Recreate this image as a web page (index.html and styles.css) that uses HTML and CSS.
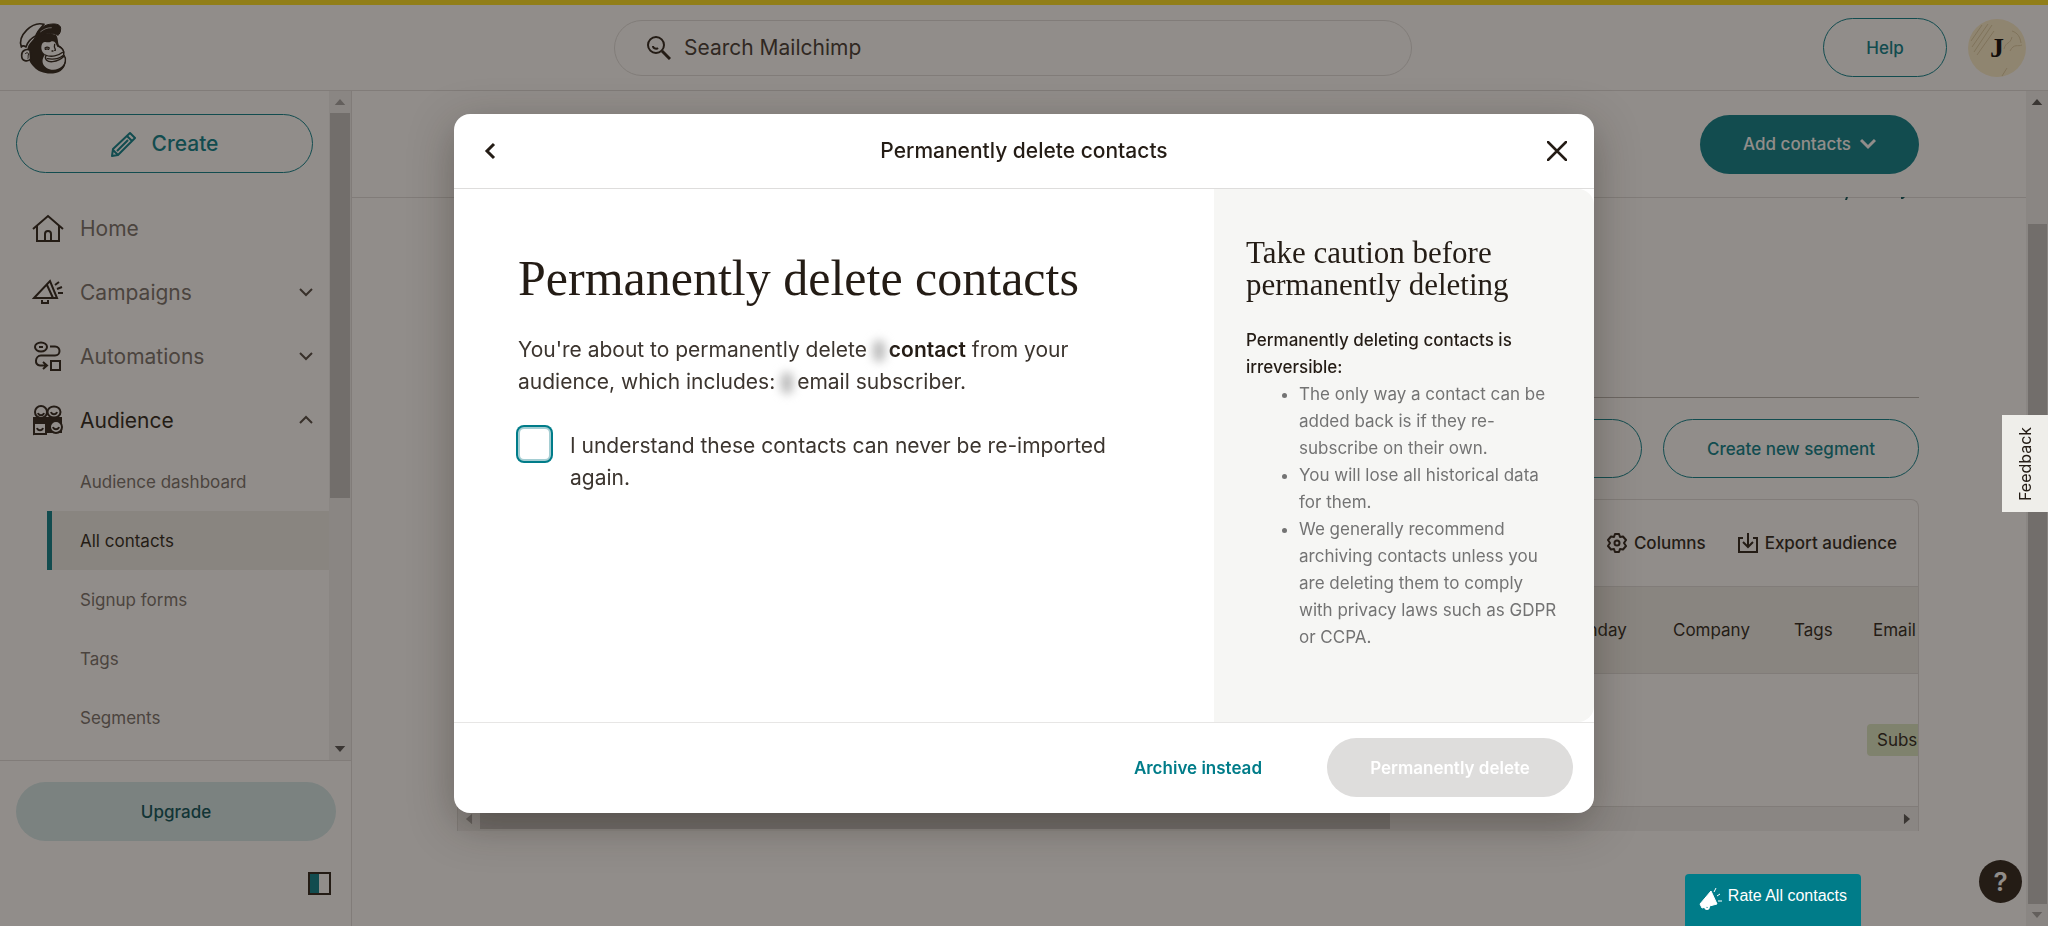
FILE: index.html
```html
<!DOCTYPE html>
<html lang="en">
<head>
    <meta charset="UTF-8">
    <meta name="viewport" content="width=device-width, initial-scale=1.0">
    <title>Permanently delete contacts | Mailchimp</title>
    <link rel="stylesheet" href="styles.css">
</head>
<body>

    <!-- Top bar -->
    <header class="topbar">
        <a href="#" class="logo" aria-label="Mailchimp">
            <svg width="64" height="66" viewBox="0 0 192 198" fill="none" stroke="#241c15" stroke-linecap="round" stroke-linejoin="round">
                <path d="M52 112 C50 90 64 78 80 66 C104 52 122 54 138 60 C146 70 142 84 148 92 C160 98 164 112 162 120 C172 132 168 156 152 168 C128 182 88 176 72 156 C60 146 54 130 52 112 Z" fill="#241c15" stroke="none"/>
                <path d="M98 84 C106 77 113 85 122 80 C136 75 138 89 142 95 C154 99 161 107 159 114 C157 124 165 124 165 132 C166 150 150 164 130 164 C114 164 103 156 99 146 C95 134 101 126 105 118 C93 110 91 94 98 84 Z" fill="#fff" stroke="none"/>
                <path d="M34 96 C22 62 66 18 102 28 C92 40 82 48 78 62 C62 70 52 82 48 96 C42 92 37 92 34 96 Z" fill="#fff" stroke-width="5"/>
                <path d="M78 62 C84 44 96 36 110 30 C130 24 152 26 152 40 C152 52 148 58 144 61 C132 54 116 54 100 60 C90 64 86 72 70 78 Z" fill="#241c15" stroke-width="3"/>
                <path d="M92 50 C102 42 112 38 124 38" stroke="#fff" stroke-width="2"/>
                <path d="M60 106 C50 100 34 106 35 122 C35 138 52 142 62 132 Z" fill="#fff" stroke-width="5"/>
                <path d="M46 116 C50 110 58 114 55 120 C53 124 56 126 54 130" stroke-width="3"/>
                <path d="M105 99 C109 96 114 96 118 99 M106 103 C110 101 113 101 116 103 M134 88 C132 94 134 100 136 103 M126 108 L129 108 M134 106 L136 106" stroke-width="4"/>
                <path d="M106 120 C124 128 146 122 158 112 M108 122 C102 132 112 142 128 140 C146 138 156 130 162 124 M112 131 C130 134 148 130 158 122" stroke-width="4"/>
                <path d="M144 92 C156 98 164 108 161 118 C170 130 168 150 154 162" stroke-width="4"/>
            </svg>
        </a>
        <form class="search" role="search">
            <svg width="24" height="24" viewBox="0 0 24 24" fill="none" stroke="#241c15" stroke-width="2">
                <circle cx="9" cy="9" r="8"/>
                <path d="M15 15 L23 23" stroke-width="3"/>
                <path d="M6 10 C6 13 10 13 11 12"/>
            </svg>
            <input type="search" id="search" aria-label="Search Mailchimp" placeholder="Search Mailchimp">
        </form>
        <div class="account">
            <button type="button" class="btn btn-outline btn-help">Help</button>
            <button type="button" class="avatar">
                <svg width="58" height="58" viewBox="0 0 58 58" fill="none" stroke="#dccba0" stroke-width="1">
                    <path d="M3 22 L14 6 M4 28 L20 5 M6 33 L24 6 M9 36 L26 12 M36 30 C38 22 42 26 44 18 M42 32 C46 24 50 28 54 26 M44 12 C50 14 52 18 53 24 M34 57 L39 49"/>
                </svg>
                <span>J</span>
            </button>
        </div>
    </header>

    <div class="layout">

        <!-- Sidebar -->
        <aside class="sidebar">
            <div class="sidebar-scroll">
                <div class="sidebar-content">
                    <button type="button" class="btn btn-outline btn-create">
                        <svg width="26" height="26" viewBox="0 0 26 26" fill="none" stroke="#007c89" stroke-width="2" stroke-linejoin="round">
                            <path d="M1 25 L2 18 L19 2 L24 7 L7 24 Z M16 5 L21 10 M6 20 L17 9 M2 19 L7 24"/>
                        </svg>
                        Create
                    </button>
                    <nav class="nav">
                        <a href="#" class="nav-item">
                            <svg width="32" height="32" viewBox="0 0 32 32" fill="none" stroke="#241c15" stroke-width="2">
                                <path d="M1 17 L16 4 L31 17 M5 14 V29 H27 V14 M13 29 V22 C13 18 19 18 19 22 V29"/>
                            </svg>
                            <span>Home</span>
                        </a>
                        <a href="#" class="nav-item">
                            <svg width="32" height="32" viewBox="0 0 32 32" fill="none" stroke="#241c15" stroke-width="2">
                                <path d="M2 22 L18 5 L25 22 Z M15 9 L21 22 M10 24 V27 H16 V24 M23 9 L27 6 M25 13 L30 11 M26 17 H31"/>
                            </svg>
                            <span>Campaigns</span>
                            <svg class="chevron" width="14" height="10" viewBox="0 0 14 10"><path d="M1 2 L7 8 L13 2"/></svg>
                        </a>
                        <a href="#" class="nav-item">
                            <svg width="32" height="32" viewBox="0 0 32 32" fill="none" stroke="#241c15" stroke-width="2">
                                <ellipse cx="9" cy="7" rx="6" ry="4.5"/>
                                <path d="M7 7 H11 M18 6.5 H23 C29 6.5 29 15.5 23 15.5 H9 C3 15.5 2 25.5 8 25.5 H14 M11 22 L15 25.5 L11 29"/>
                                <rect x="19" y="21" width="9" height="9"/>
                            </svg>
                            <span>Automations</span>
                            <svg class="chevron" width="14" height="10" viewBox="0 0 14 10"><path d="M1 2 L7 8 L13 2"/></svg>
                        </a>
                        <a href="#" class="nav-item nav-item-open">
                            <svg width="32" height="32" viewBox="0 0 32 32" stroke="#241c15" stroke-width="2">
                                <path d="M2 14 H29 V28 H14 L2 30 Z" fill="#241c15"/>
                                <g fill="#fff">
                                    <circle cx="9" cy="8" r="6"/>
                                    <ellipse cx="22" cy="8" rx="6.5" ry="5.5"/>
                                    <rect x="2" y="19" width="12" height="11"/>
                                    <circle cx="24" cy="23" r="6"/>
                                </g>
                                <path d="M6 9 C7 12 11 12 12 9 M19 8 C20 11 24 11 25 8 M5 24 C6 27 10 27 11 24 M21 23 C22 26 26 26 27 23" fill="none"/>
                            </svg>
                            <span>Audience</span>
                            <svg class="chevron" width="14" height="10" viewBox="0 0 14 10"><path d="M1 8 L7 2 L13 8"/></svg>
                        </a>
                        <div class="subnav">
                            <a href="#" class="subnav-item">Audience dashboard</a>
                            <a href="#" class="subnav-item active">All contacts</a>
                            <a href="#" class="subnav-item">Signup forms</a>
                            <a href="#" class="subnav-item">Tags</a>
                            <a href="#" class="subnav-item">Segments</a>
                        </div>
                    </nav>
                </div>
                <div class="scrollbar">
                    <span class="arrow arrow-up disabled"></span>
                    <span class="thumb thumb-sidebar"></span>
                    <span class="arrow arrow-down"></span>
                </div>
            </div>
            <div class="sidebar-footer">
                <button type="button" class="btn btn-upgrade">Upgrade</button>
                <button type="button" class="toggle" aria-label="Collapse sidebar"></button>
            </div>
        </aside>

        <!-- Main content -->
        <main class="main">
            <div class="page">
                <div class="page-header">
                    <button type="button" class="btn btn-primary">
                        Add contacts
                        <svg width="16" height="12" viewBox="0 0 16 12" fill="none" stroke="#fff" stroke-width="3"><path d="M1 2 L8 9 L15 2"/></svg>
                    </button>
                    <!-- Tips of the content scrolled under the header -->
                    <svg class="scrolled-tips" width="64" height="3" viewBox="0 0 64 3" fill="#004e56"><path d="M3 0 H5 L4 3 H2 Z M58 0 H62 L60 2 H58 Z"/></svg>
                </div>
                <div class="page-body">
                    <section class="summary"></section>
                    <div class="segment-actions">
                        <button type="button" class="btn btn-outline btn-segment" aria-label="View segments"></button>
                        <button type="button" class="btn btn-outline btn-segment">Create new segment</button>
                    </div>
                    <div class="card">
                        <div class="card-toolbar">
                            <button type="button" class="tool">
                                <svg width="20" height="20" viewBox="0 0 20 20" fill="none" stroke="#241c15" stroke-width="2" stroke-linejoin="round">
                                    <path d="M8 1 H12 L13 4 L16 3.5 L19 7 L17 10 L19 13 L16 16.5 L13 16 L12 19 H8 L7 16 L4 16.5 L1 13 L3 10 L1 7 L4 3.5 L7 4 Z"/>
                                    <circle cx="10" cy="10" r="2.5"/>
                                </svg>
                                Columns
                            </button>
                            <button type="button" class="tool">
                                <svg width="20" height="20" viewBox="0 0 20 20" fill="none" stroke="#241c15" stroke-width="2">
                                    <path d="M5 5 H1 V19 H19 V5 H15 M10 0 V14 M5 9 L10 14 L15 9"/>
                                </svg>
                                Export audience
                            </button>
                        </div>
                        <table class="contacts">
                            <thead>
                                <tr>
                                    <th></th>
                                    <th class="col-birthday">Birthday</th>
                                    <th class="col-company">Company</th>
                                    <th class="col-tags">Tags</th>
                                    <th class="col-email">Email Marketing</th>
                                </tr>
                            </thead>
                            <tbody>
                                <tr>
                                    <td></td>
                                    <td></td>
                                    <td></td>
                                    <td></td>
                                    <td><span class="badge">Subscribed</span></td>
                                </tr>
                            </tbody>
                        </table>
                        <div class="scrollbar scrollbar-x">
                            <span class="arrow arrow-left disabled"></span>
                            <span class="thumb thumb-table"></span>
                            <span class="arrow arrow-right"></span>
                        </div>
                    </div>
                </div>
                <button type="button" class="help-bubble" aria-label="Help">?</button>
            </div>
            <div class="scrollbar">
                <span class="arrow arrow-up"></span>
                <span class="thumb thumb-page"></span>
                <span class="arrow arrow-down disabled"></span>
            </div>
        </main>
    </div>

    <!-- Modal -->
    <div class="overlay">
        <div class="modal" role="dialog" aria-labelledby="modalTitle">
            <div class="modal-header">
                <button type="button" class="icon-btn" aria-label="Back">
                    <svg width="20" height="20" viewBox="0 0 20 20" fill="none" stroke="#241c15" stroke-width="3"><path d="M13 3 L6 10 L13 17"/></svg>
                </button>
                <h2 class="modal-title" id="modalTitle">Permanently delete contacts</h2>
                <button type="button" class="icon-btn" aria-label="Close">
                    <svg width="20" height="20" viewBox="0 0 20 20" fill="none" stroke="#241c15" stroke-width="2.5" stroke-linecap="round"><path d="M1 1 L19 19 M19 1 L1 19"/></svg>
                </button>
            </div>
            <div class="modal-body">
                <div class="modal-main">
                    <h1>Permanently delete contacts</h1>
                    <p>You're about to permanently delete <span class="redacted"></span><strong>contact</strong> from your audience, which includes: <span class="redacted"></span>email subscriber.</p>
                    <div class="confirm">
                        <input type="checkbox" id="confirm">
                        <label for="confirm">I understand these contacts can never be re-imported again.</label>
                    </div>
                </div>
                <div class="caution">
                    <h3>Take caution before permanently deleting</h3>
                    <strong>Permanently deleting contacts is irreversible:</strong>
                    <ul>
                        <li>The only way a contact can be added back is if they re-subscribe on their own.</li>
                        <li>You will lose all historical data for them.</li>
                        <li>We generally recommend archiving contacts unless you are deleting them to comply with privacy laws such as GDPR or CCPA.</li>
                    </ul>
                </div>
            </div>
            <div class="modal-footer">
                <a href="#" class="archive-link">Archive instead</a>
                <button type="button" class="btn btn-delete" id="deleteBtn" disabled>Permanently delete</button>
            </div>
        </div>
    </div>

    <!-- Floating widgets -->
    <button type="button" class="feedback">Feedback</button>
    <button type="button" class="rate">
        <svg width="24" height="24" viewBox="0 0 24 24" fill="#fff" stroke="#fff" stroke-width="1">
            <path d="M12 4 L18 17 L3 21 L1 17 Z"/>
            <path d="M6 19 C6 23 10 23 10 19" fill="none" stroke-width="2"/>
            <path d="M15 5 L17 1 M18 9 L21 7 M19 14 L23 14" fill="none"/>
        </svg>
        Rate All contacts
    </button>

</body>
</html>
```
FILE: styles.css
```css
* {
    box-sizing: border-box;
}

body {
    display: flex;
    flex-direction: column;
    height: 100vh;
    margin: 0;
    overflow: hidden;
    background-color: #fff;
    color: #241c15;
    font-family: Inter, Arial, sans-serif;
    font-size: 17px;
}

button {
    font-family: inherit;
    color: inherit;
    background: none;
    border: none;
    padding: 0;
    cursor: pointer;
}

a {
    color: inherit;
    text-decoration: none;
}

.btn {
    display: flex;
    align-items: center;
    justify-content: center;
    height: 59px;
    border-radius: 30px;
    font-size: 17px;
    font-weight: 500;
}

.btn-outline {
    border: 1px solid #007c89;
    color: #007c89;
}

/* Top bar */
.topbar {
    display: flex;
    align-items: center;
    justify-content: space-between;
    flex-shrink: 0;
    height: 91px;
    padding: 0 22px 0 10px;
    border-top: 5px solid #ffe01b;
    border-bottom: 1px solid #dedddc;
}

.logo {
    display: flex;
    width: 193px;
}

.search {
    display: flex;
    align-items: center;
    gap: 11px;
    width: 798px;
    max-width: 50%;
    height: 56px;
    padding: 0 32px;
    border: 1px solid #dedddc;
    border-radius: 28px;
}

.search input {
    flex: 1;
    border: none;
    outline: none;
    background: none;
    font-family: inherit;
    font-size: 21px;
}

.search input::placeholder {
    color: #3c352f;
}

.account {
    display: flex;
    align-items: center;
    gap: 21px;
}

.btn-help {
    width: 124px;
}

.avatar {
    display: grid;
    place-items: center;
    width: 58px;
    height: 58px;
    border-radius: 50%;
    background-color: #fbeecb;
    font-family: "Liberation Serif", serif;
    font-size: 28px;
    font-weight: bold;
    color: #000;
}

.avatar svg,
.avatar span {
    grid-area: 1 / 1;
}

.layout {
    display: flex;
    flex: 1;
    min-height: 0;
}

/* Sidebar */
.sidebar {
    display: flex;
    flex-direction: column;
    width: 352px;
    border-right: 1px solid #dedddc;
}

.sidebar-scroll {
    display: flex;
    flex: 1;
    min-height: 0;
    border-bottom: 1px solid #dedddc;
}

.sidebar-content {
    flex: 1;
    overflow: hidden;
    padding-top: 23px;
}

.btn-create {
    gap: 15px;
    width: calc(100% - 32px);
    margin: 0 16px 23px;
    font-size: 21px;
}

.nav-item {
    display: flex;
    align-items: center;
    gap: 16px;
    height: 64px;
    padding: 0 16px 0 32px;
    color: #736d68;
    font-size: 21px;
}

.nav-item-open {
    color: #241c15;
}

.chevron {
    margin-left: auto;
    fill: none;
    stroke: #4c453f;
    stroke-width: 2;
}

.subnav-item {
    display: flex;
    align-items: center;
    height: 59px;
    margin-left: 47px;
    padding-left: 33px;
    color: #736d68;
}

.subnav-item.active {
    padding-left: 28px;
    border-left: 5px solid #007c89;
    background-color: #efeeea;
    color: #241c15;
}

.sidebar-footer {
    display: flex;
    flex-direction: column;
    gap: 31px;
    height: 165px;
    padding: 21px 15px 0 16px;
}

.btn-upgrade {
    background-color: #d2e8eb;
    color: #004e56;
}

.toggle {
    align-self: flex-end;
    width: 23px;
    height: 23px;
    margin-right: 5px;
    border: 2px solid #241c15;
    background: linear-gradient(to right, #007c89 50%, #fff 50%);
}

/* Scrollbars */
.scrollbar {
    display: flex;
    flex-direction: column;
    align-items: center;
    width: 22px;
    background-color: #f1f1f1;
}

.scrollbar-x {
    flex-direction: row;
    width: 100%;
    height: 24px;
}

.thumb {
    background-color: #c1c1c1;
}

.thumb-sidebar {
    width: 20px;
    height: 385px;
}

.thumb-page {
    width: 19px;
    height: 680px;
    margin-top: auto;
}

.thumb-table {
    flex: 0 1 910px;
    height: 19px;
}

.arrow {
    flex: none;
    width: 22px;
    height: 22px;
    background-color: #505050;
}

.arrow.disabled {
    background-color: #a3a3a3;
}

.arrow-up {
    clip-path: polygon(50% 36%, 74% 64%, 26% 64%);
}

.arrow-down {
    clip-path: polygon(50% 64%, 74% 36%, 26% 36%);
}

.arrow-left {
    clip-path: polygon(36% 50%, 64% 26%, 64% 74%);
}

.arrow-right {
    margin-left: auto;
    clip-path: polygon(64% 50%, 36% 26%, 36% 74%);
}

.sidebar .arrow-down {
    margin-top: auto;
}

/* Main content */
.main {
    display: flex;
    flex: 1;
    min-width: 0;
}

.page {
    position: relative;
    flex: 1;
    min-width: 0;
}

.page-header {
    position: relative;
    display: flex;
    align-items: center;
    justify-content: flex-end;
    height: 107px;
    padding: 0 107px 0 105px;
    border-bottom: 1px solid #dedddc;
}

.scrolled-tips {
    position: absolute;
    right: 119px;
    bottom: -3px;
}

.btn-primary {
    gap: 9px;
    padding: 0 43px;
    background-color: #007c89;
    color: #fff;
}

.page-body {
    padding: 0 107px 0 105px;
}

.summary {
    height: 200px;
    border-bottom: 1px solid #b5b2af;
}

.segment-actions {
    display: flex;
    justify-content: flex-end;
    gap: 21px;
    padding: 21px 0;
}

.btn-segment {
    width: 256px;
}

.card {
    overflow: hidden;
    border: 1px solid #dedddc;
    border-bottom: none;
    border-radius: 8px 8px 0 0;
}

.card-toolbar {
    display: flex;
    align-items: center;
    justify-content: flex-end;
    gap: 32px;
    height: 86px;
    padding-right: 21px;
}

.tool {
    display: flex;
    align-items: center;
    gap: 7px;
    font-size: 17px;
    font-weight: 500;
}

.contacts {
    width: calc(100% + 140px);
    table-layout: fixed;
    border-collapse: collapse;
}

.contacts th {
    height: 87px;
    padding: 0 22px;
    background-color: #efeeea;
    border: solid #dedddc;
    border-width: 1px 0;
    font-weight: 400;
    text-align: left;
    white-space: nowrap;
}

.contacts td {
    height: 133px;
    padding: 0 16px;
    border-bottom: 1px solid #dedddc;
}

.col-birthday {
    width: 113px;
}

.col-company {
    width: 121px;
}

.col-tags {
    width: 79px;
}

.col-email {
    width: 207px;
}

.badge {
    display: inline-block;
    padding: 0 10px;
    border-radius: 4px;
    background-color: #dbe8c4;
    line-height: 32px;
}

.help-bubble {
    position: absolute;
    right: 4px;
    bottom: 23px;
    width: 43px;
    height: 43px;
    border-radius: 50%;
    background-color: #241c15;
    color: #fff;
    font-size: 26px;
    font-weight: 600;
}

/* Modal */
.overlay {
    position: fixed;
    inset: 0;
    display: flex;
    align-items: center;
    justify-content: center;
    background-color: rgba(36, 28, 21, 0.5);
}

.modal {
    width: 1140px;
    max-width: 90%;
    border-radius: 16px;
    background-color: #fff;
    box-shadow: 0 12px 44px rgba(36, 28, 21, 0.35);
}

.modal-header {
    display: flex;
    align-items: center;
    justify-content: space-between;
    height: 75px;
    padding: 0 27px;
    border-bottom: 1px solid #dedddc;
}

.modal-title {
    margin: 0;
    font-size: 21px;
    font-weight: 500;
}

.icon-btn {
    display: flex;
}

.modal-body {
    display: flex;
    min-height: 533px;
}

.modal-main {
    flex: 1;
    padding: 58px 64px;
    color: #3c352f;
    font-size: 21px;
    line-height: 32px;
}

.modal-main h1 {
    margin: 0 0 25px;
    color: #241c15;
    font-family: "Liberation Serif", serif;
    font-size: 50px;
    font-weight: normal;
    line-height: 62px;
}

.modal-main p {
    margin: 0 0 29px;
}

.modal-main strong {
    color: #241c15;
    font-weight: 600;
}

.redacted {
    display: inline-block;
    width: 12px;
    height: 22px;
    margin-right: 4px;
    border-radius: 6px;
    background-color: #bbb;
    filter: blur(5px);
    vertical-align: middle;
}

.confirm {
    display: flex;
    align-items: flex-start;
    gap: 19px;
}

.confirm label {
    padding-top: 3px;
}

.confirm input {
    appearance: none;
    flex: none;
    width: 33px;
    height: 34px;
    margin: 0;
    border: 2px solid #a5ced3;
    border-radius: 6px;
    background-color: #fff;
    box-shadow: 0 0 0 2px #007c89;
}

.confirm input:checked {
    background-color: #007c89;
}

.caution {
    width: 380px;
    padding: 48px 34px 48px 32px;
    border-radius: 0 16px 16px 0;
    background-color: #f6f6f4;
    line-height: 27px;
}

.caution h3 {
    margin: 0 0 26px;
    font-family: "Liberation Serif", serif;
    font-size: 31px;
    font-weight: normal;
    line-height: 32px;
}

.caution strong {
    font-weight: 500;
}

.caution ul {
    margin: 0;
    padding-left: 53px;
    color: #737373;
}

.modal-footer {
    display: flex;
    align-items: center;
    justify-content: flex-end;
    gap: 65px;
    height: 91px;
    padding-right: 21px;
    border-top: 1px solid #e7e6e5;
}

.archive-link {
    color: #007c89;
    font-weight: 600;
}

.btn-delete {
    width: 246px;
    background-color: #dedddc;
    color: #fff;
    font-weight: 600;
    cursor: default;
}

/* Floating widgets */
.feedback {
    position: fixed;
    top: 415px;
    right: 0;
    width: 46px;
    height: 97px;
    background-color: #efeeea;
    font-size: 16px;
    writing-mode: vertical-rl;
    rotate: 180deg;
}

.rate {
    position: fixed;
    right: 187px;
    bottom: 0;
    display: flex;
    gap: 5px;
    height: 52px;
    padding: 13px 14px;
    border-radius: 4px 4px 0 0;
    background-color: #007c89;
    color: #fff;
    font-family: "Liberation Sans", Arial, sans-serif;
    font-size: 16px;
}
```
